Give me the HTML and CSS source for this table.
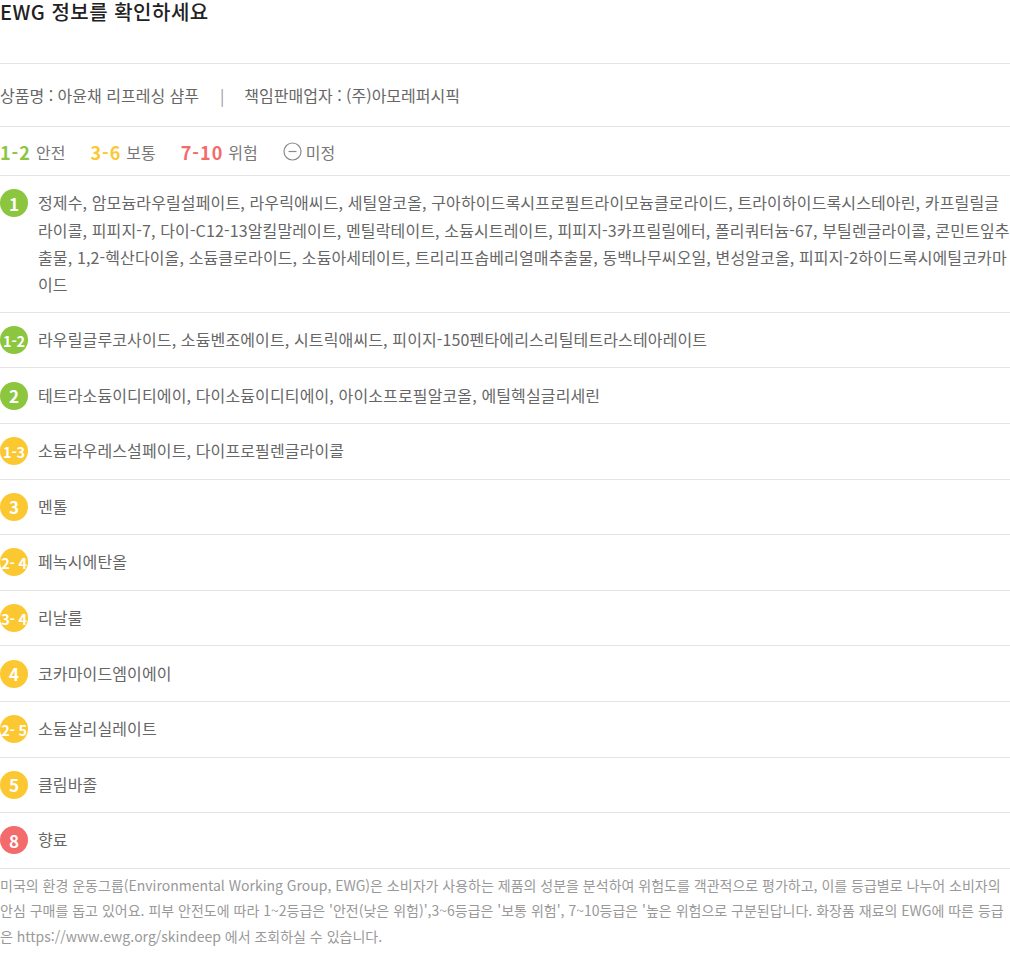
FILE: index.html
```html
<!DOCTYPE html>
<html lang="ko">
<head>
    <meta charset="UTF-8">
    <meta name="viewport" content="width=device-width, initial-scale=1.0">
    <title>EWG 정보</title>
    <link rel="stylesheet" href="styles.css">
</head>
<body>
    <div class="ewg-info">
        <h2 class="ewg-title">EWG 정보를 확인하세요</h2>

        <div class="product-row">
            <span>상품명 : 아윤채 리프레싱 샴푸</span>
            <span class="divider">|</span>
            <span>책임판매업자 : (주)아모레퍼시픽</span>
        </div>

        <div class="legend">
            <span class="legend-item"><b class="safe">1-2</b> 안전</span>
            <span class="legend-item"><b class="normal">3-6</b> 보통</span>
            <span class="legend-item"><b class="danger">7-10</b> 위험</span>
            <span class="legend-item">
                <svg class="none-icon" width="19" height="19" viewBox="0 0 19 19">
                    <circle cx="9.5" cy="9.5" r="8.5" fill="none" stroke="#8a8a8a" stroke-width="1.2"/>
                    <line x1="5.5" y1="9.5" x2="13.5" y2="9.5" stroke="#8a8a8a" stroke-width="1.2"/>
                </svg>미정
            </span>
        </div>

        <ul class="ingredient-list">
            <li class="ingredient">
                <span class="grade safe-bg">1</span>
                <p>정제수, 암모늄라우릴설페이트, 라우릭애씨드, 세틸알코올, 구아하이드록시프로필트라이모늄클로라이드, 트라이하이드록시스테아린, 카프릴릴글라이콜, 피피지-7, 다이-C12-13알킬말레이트, 멘틸락테이트, 소듐시트레이트, 피피지-3카프릴릴에터, 폴리쿼터늄-67, 부틸렌글라이콜, 콘민트잎추출물, 1,2-헥산다이올, 소듐클로라이드, 소듐아세테이트, 트리리프솝베리열매추출물, 동백나무씨오일, 변성알코올, 피피지-2하이드록시에틸코카마이드</p>
            </li>
            <li class="ingredient">
                <span class="grade safe-bg range">1-2</span>
                <p>라우릴글루코사이드, 소듐벤조에이트, 시트릭애씨드, 피이지-150펜타에리스리틸테트라스테아레이트</p>
            </li>
            <li class="ingredient">
                <span class="grade safe-bg">2</span>
                <p>테트라소듐이디티에이, 다이소듐이디티에이, 아이소프로필알코올, 에틸헥실글리세린</p>
            </li>
            <li class="ingredient">
                <span class="grade normal-bg range">1-3</span>
                <p>소듐라우레스설페이트, 다이프로필렌글라이콜</p>
            </li>
            <li class="ingredient">
                <span class="grade normal-bg">3</span>
                <p>멘톨</p>
            </li>
            <li class="ingredient">
                <span class="grade normal-bg range">2- 4</span>
                <p>페녹시에탄올</p>
            </li>
            <li class="ingredient">
                <span class="grade normal-bg range">3- 4</span>
                <p>리날룰</p>
            </li>
            <li class="ingredient">
                <span class="grade normal-bg">4</span>
                <p>코카마이드엠이에이</p>
            </li>
            <li class="ingredient">
                <span class="grade normal-bg range">2- 5</span>
                <p>소듐살리실레이트</p>
            </li>
            <li class="ingredient">
                <span class="grade normal-bg">5</span>
                <p>클림바졸</p>
            </li>
            <li class="ingredient">
                <span class="grade danger-bg">8</span>
                <p>향료</p>
            </li>
        </ul>

        <p class="ewg-note">미국의 환경 운동그룹(Environmental Working Group, EWG)은 소비자가 사용하는 제품의 성분을 분석하여 위험도를 객관적으로 평가하고, 이를 등급별로 나누어 소비자의 안심 구매를 돕고 있어요. 피부 안전도에 따라 1~2등급은 '안전(낮은 위험)',3~6등급은 '보통 위험', 7~10등급은 '높은 위험으로 구분된답니다. 화장품 재료의 EWG에 따른 등급은 https://www.ewg.org/skindeep 에서 조회하실 수 있습니다.</p>
    </div>
</body>
</html>
```

FILE: styles.css
```css
body {
    margin: 0;
    background: #fff;
    font-family: "Noto Sans CJK KR", "Noto Sans", sans-serif;
    color: #555;
}

.ewg-info {
    width: 1010px;
}

.ewg-title {
    margin: 0;
    height: 63px;
    font-size: 20px;
    font-weight: 500;
    line-height: 23px;
    letter-spacing: 0.5px;
    color: #222;
    border-bottom: 1px solid #e4e4e4;
}

.product-row {
    display: flex;
    align-items: center;
    height: 62px;
    font-size: 16px;
    color: #666;
    border-bottom: 1px solid #e4e4e4;
}

.product-row .divider {
    margin: 0 20px 0 21px;
    color: #999;
}

.legend {
    display: flex;
    align-items: center;
    gap: 25px;
    height: 47px;
    padding-top: 1px;
    font-size: 16px;
    color: #777;
    border-bottom: 1px solid #e4e4e4;
}

.legend-item {
    display: flex;
    align-items: center;
}

.legend-item b {
    font-size: 18px;
    font-weight: 700;
    letter-spacing: 1px;
    margin-right: 5px;
}

.none-icon {
    margin-right: 4px;
}

.safe { color: #8cc63f; }
.normal { color: #fcc832; }
.danger { color: #f36b6b; }

.safe-bg { background: #8cc63f; }
.normal-bg { background: #fcc832; }
.danger-bg { background: #f36b6b; }

.ingredient-list {
    list-style: none;
    margin: 0;
    padding: 0;
}

.ingredient {
    display: flex;
    align-items: flex-start;
    padding: 13.3px 0;
    border-bottom: 1px solid #e4e4e4;
}

.grade {
    flex: none;
    display: flex;
    align-items: center;
    justify-content: center;
    width: 28px;
    height: 28px;
    border-radius: 50%;
    color: #fff;
    font-size: 17px;
    font-weight: 700;
    white-space: nowrap;
}

.grade.range {
    font-size: 14.5px;
    letter-spacing: -0.2px;
}

.ingredient p {
    margin: 0 0 0 10px;
    font-size: 16px;
    line-height: 27.3px;
    letter-spacing: 0.13px;
    color: #666;
}

.ewg-note {
    margin: 0;
    padding: 4px 0 0;
    font-size: 14px;
    line-height: 25.5px;
    color: #999;
}
```
